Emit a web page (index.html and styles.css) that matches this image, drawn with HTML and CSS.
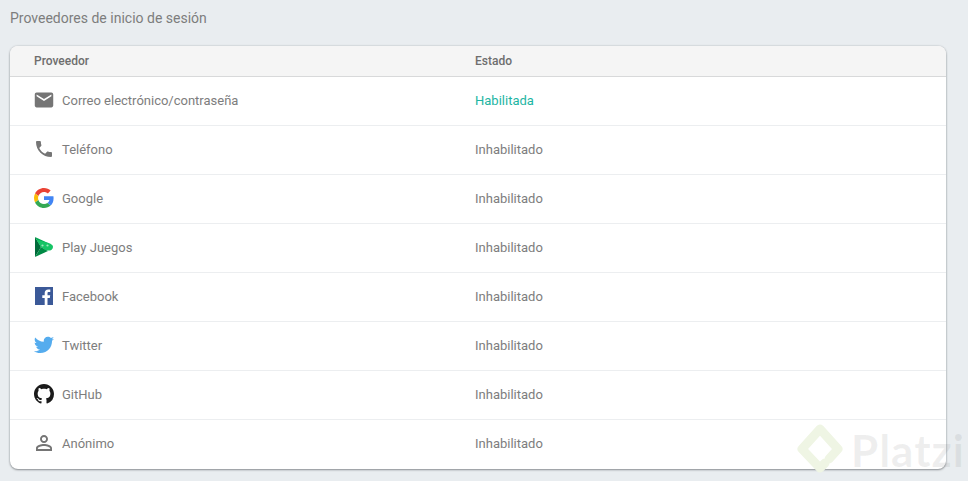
FILE: index.html
```html
<!DOCTYPE html>
<html lang="es">
<head>
<meta charset="utf-8">
<title>Proveedores de inicio de sesión</title>
<link rel="stylesheet" href="styles.css">
</head>
<body>
<main class="page">
  <h1 class="title">Proveedores de inicio de sesión</h1>
  <section class="card">
    <div class="row head"><div class="col-a">Proveedor</div><div class="col-b">Estado</div></div>
    <div class="row">
      <div class="col-a"><svg class="icon" viewBox="-1 -1 26 26"><path fill="#757575" d="M20 4H4c-1.1 0-1.99.9-1.99 2L2 18c0 1.1.9 2 2 2h16c1.1 0 2-.9 2-2V6c0-1.100-.9-2-2-2zm0 4l-8 5-8-5V6l8 5 8-5v2z"/></svg><span>Correo electrónico/contraseña</span></div>
      <div class="col-b on">Habilitada</div>
    </div>
    <div class="row">
      <div class="col-a"><svg class="icon" viewBox="-1.500 -1.500 27 27"><path fill="#757575" d="M6.620 10.790c1.440 2.830 3.760 5.140 6.590 6.590l2.200-2.200c.27-.27.67-.36 1.020-.24 1.120.37 2.330.57 3.570.57.55 0 1 .45 1 1V20c0 .55-.45 1-1 1-9.390 0-17-7.610-17-17 0-.55.45-1 1-1h3.500c.55 0 1 .45 1 1 0 1.250.2 2.450.57 3.570.11.35.03.74-.25 1.020l-2.200 2.200z"/></svg><span>Teléfono</span></div>
      <div class="col-b">Inhabilitado</div>
    </div>
    <div class="row">
      <div class="col-a"><svg class="icon" viewBox="-4.800 -4.800 57.600 57.600"><path fill="#EA4335" d="M24 9.500c3.540 0 6.710 1.220 9.210 3.600l6.850-6.850C35.900 2.380 30.470 0 24 0 14.620 0 6.510 5.380 2.560 13.220l7.980 6.190C12.430 13.720 17.740 9.500 24 9.500z"/><path fill="#4285F4" d="M46.980 24.550c0-1.570-.15-3.090-.38-4.550H24v9.020h12.940c-.58 2.960-2.260 5.480-4.780 7.180l7.730 6c4.510-4.180 7.090-10.360 7.090-17.650z"/><path fill="#FBBC05" d="M10.530 28.590c-.48-1.450-.76-2.990-.76-4.590s.27-3.140.76-4.590l-7.980-6.190C.92 16.460 0 20.120 0 24c0 3.880.92 7.540 2.560 10.780l7.970-6.190z"/><path fill="#34A853" d="M24 48c6.480 0 11.930-2.130 15.890-5.810l-7.730-6c-2.150 1.450-4.920 2.300-8.160 2.300-6.260 0-11.570-4.220-13.470-9.910l-7.980 6.190C6.510 42.620 14.620 48 24 48z"/></svg><span>Google</span></div>
      <div class="col-b">Inhabilitado</div>
    </div>
    <div class="row">
      <div class="col-a"><svg class="icon" viewBox="0 0 24 24"><path fill="#006b3a" d="M3 2l6 10-6 10z"/><path fill="#008a45" d="M3 22l6-10 7 4z"/><path fill="#00a651" d="M3 2l13 6-7 4z"/><path fill="#16c465" d="M4.500 4.500l10 3c3 .6 6.500 2 6.500 4.500s-2.500 3.800-5 3.600c-2 0-3.500-1-5-2L9 12z"/><circle cx="10.500" cy="10.500" r="1.100" fill="#9fe8bd"/><circle cx="15.500" cy="10.500" r="1.100" fill="#9fe8bd"/></svg><span>Play Juegos</span></div>
      <div class="col-b">Inhabilitado</div>
    </div>
    <div class="row">
      <div class="col-a"><svg class="icon" viewBox="0 0 24 24"><path fill="#3b5998" d="M3 3h18v18h-5.500v-7h2.300l.4-2.800h-2.700V9.400c0-.8.3-1.300 1.400-1.300h1.400V5.600c-.3 0-1.100-.1-2.100-.1-2.100 0-3.500 1.300-3.500 3.600v2.100h-2.400V14h2.400v7H3z"/></svg><span>Facebook</span></div>
      <div class="col-b">Inhabilitado</div>
    </div>
    <div class="row">
      <div class="col-a"><svg class="icon" viewBox="-1 -1 26 26"><path fill="#55acee" d="M23 5.100c-.8.400-1.700.6-2.600.7.900-.6 1.600-1.400 2-2.500-.9.500-1.900.9-2.900 1.100-.8-.9-2-1.400-3.300-1.400-2.500 0-4.500 2-4.500 4.500 0 .4 0 .7.100 1C8 8.300 4.700 6.500 2.500 3.800c-.4.700-.6 1.400-.6 2.300 0 1.600.8 2.900 2 3.700-.7 0-1.400-.2-2-.6v.1c0 2.200 1.500 4 3.600 4.400-.4.100-.8.200-1.200.2-.3 0-.6 0-.8-.1.6 1.800 2.200 3.100 4.200 3.100-1.500 1.200-3.500 1.900-5.600 1.900-.4 0-.7 0-1.100-.1 2 1.300 4.400 2 6.900 2 8.300 0 12.800-6.900 12.800-12.800v-.6c.9-.6 1.700-1.400 2.300-2.200z"/></svg><span>Twitter</span></div>
      <div class="col-b">Inhabilitado</div>
    </div>
    <div class="row">
      <div class="col-a"><svg class="icon" viewBox="-1.600 -1.600 19.200 19.200"><path fill="#1b1b1b" fill-rule="evenodd" d="M8 0C3.580 0 0 3.580 0 8c0 3.540 2.290 6.530 5.470 7.590.4.070.55-.17.55-.38 0-.19-.010-.82-.010-1.490-2.010.37-2.530-.49-2.690-.94-.09-.23-.48-.94-.82-1.130-.28-.15-.68-.52-.010-.53.63-.010 1.080.58 1.230.82.720 1.210 1.870.87 2.330.66.070-.52.280-.87.510-1.070-1.780-.2-3.640-.89-3.640-3.950 0-.87.310-1.590.82-2.150-.08-.2-.36-1.020.08-2.120 0 0 .67-.21 2.200.82.640-.18 1.320-.27 2-.27s1.360.09 2 .27c1.530-1.040 2.200-.82 2.200-.82.44 1.100.16 1.920.08 2.120.51.56.82 1.270.82 2.150 0 3.070-1.870 3.750-3.650 3.950.29.25.54.73.54 1.480 0 1.070-.01 1.930-.01 2.200 0 .21.15.46.55.38A8.010 8.010 0 0 0 16 8c0-4.420-3.580-8-8-8z"/></svg><span>GitHub</span></div>
      <div class="col-b">Inhabilitado</div>
    </div>
    <div class="row last">
      <div class="col-a"><svg class="icon" viewBox="0 0 24 24"><path fill="#757575" d="M12 5.900c1.160 0 2.100.94 2.100 2.100s-.94 2.100-2.100 2.100S9.900 9.160 9.900 8s.94-2.100 2.100-2.100m0 9c2.970 0 6.100 1.460 6.100 2.100v1.100H5.900V17c0-.64 3.130-2.100 6.100-2.100M12 4C9.790 4 8 5.790 8 8s1.790 4 4 4 4-1.790 4-4-1.790-4-4-4zm0 9c-2.670 0-8 1.340-8 4v3h16v-3c0-2.660-5.330-4-8-4z"/></svg><span>Anónimo</span></div>
      <div class="col-b">Inhabilitado</div>
    </div>
  </section>
</main>
<div class="mark" aria-hidden="true">
  <svg class="mark-logo" viewBox="0 0 46 54"><path fill="none" stroke="#eff5e4" stroke-width="9" stroke-linejoin="round" stroke-linecap="round" d="M28 40l-5 5L5 26 23 6l18 20-9 10"/></svg>
  <span class="mark-text">Platzi</span>
</div>
</body>
</html>
```

FILE: styles.css
```css
* { box-sizing: border-box; }
html, body { margin: 0; height: 100%; }
body {
  background: #e9edf0;
  font-family: Roboto, "Liberation Sans", sans-serif;
  color: #7d7d7d;
  overflow: hidden;
  position: relative;
}
.page { padding: 10px 22px 0 10px; }
.title {
  margin: 0 0 19px;
  font-size: 14px;
  line-height: 17px;
  font-weight: 400;
  color: #7d7d7d;
}
.card {
  background: #fff;
  border-radius: 8px;
  overflow: hidden;
  box-shadow: 0 1px 2px rgba(60,64,67,.5), 0 0 2px rgba(60,64,67,.25);
}
.row {
  display: flex;
  align-items: center;
  height: 49px;
  padding: 0 0 2px 24px;
  border-bottom: 1px solid #eceef0;
  font-size: 13px;
}
.row.last { padding-bottom: 3px; border-bottom: 0; }
.row.head {
  height: 31px;
  padding-bottom: 0;
  background: #f5f5f5;
  border-bottom: 1px solid #d8d9da;
  font-size: 12px;
  font-weight: 500;
  color: #6e6e6e;
}
.col-a { width: 441px; display: flex; align-items: center; gap: 6px; }
.icon { width: 24px; height: 24px; margin-left: -2px; flex: none; }
.on { color: #1db5a3; }
.mark {
  position: absolute;
  left: 797px;
  top: 423px;
  display: flex;
  align-items: center;
  gap: 8px;
  pointer-events: none;
}
.mark-logo { width: 46px; height: 54px; }
.mark-text {
  font-family: Lato, sans-serif;
  font-size: 44px;
  font-weight: 700;
  letter-spacing: 1px;
  line-height: 50px;
  white-space: nowrap;
  color: rgba(120,120,120,.12);
}
```
